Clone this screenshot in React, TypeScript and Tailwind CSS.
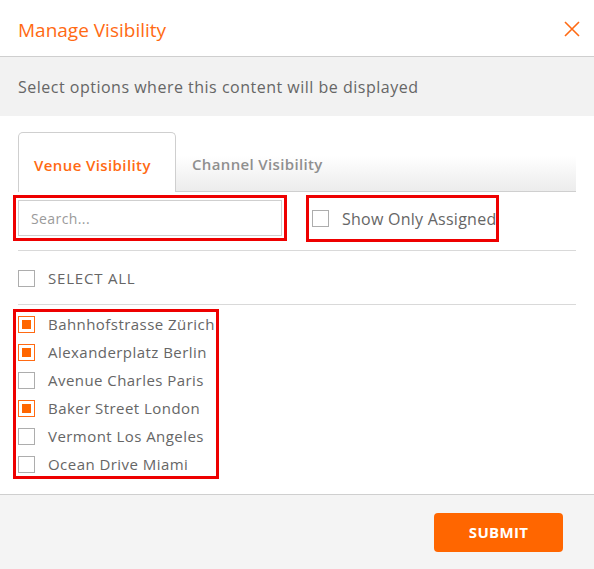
import { useState } from 'react'

// ── Data ──────────────────────────────────────────────────────────────────────

const VENUES = [
  { name: 'Bahnhofstrasse Zürich', checked: true },
  { name: 'Alexanderplatz Berlin', checked: true },
  { name: 'Avenue Charles Paris',  checked: false },
  { name: 'Baker Street London',   checked: true },
  { name: 'Vermont Los Angeles',   checked: false },
  { name: 'Ocean Drive Miami',     checked: false },
]

// ── Checkbox ──────────────────────────────────────────────────────────────────

function Box({ checked, onClick }: { checked: boolean; onClick?: () => void }) {
  return (
    <button
      type="button"
      onClick={onClick}
      className={
        checked
          ? 'w-[17px] h-[17px] shrink-0 border border-[#ff6a13] p-[3px] bg-white'
          : 'w-[17px] h-[17px] shrink-0 border border-[#adadad] bg-white'
      }
    >
      {checked && <span className="block w-full h-full bg-[#ff6600]" />}
    </button>
  )
}

// ── Modal ─────────────────────────────────────────────────────────────────────

export default function App() {
  const [venues, setVenues] = useState(VENUES)
  const [onlyAssigned, setOnlyAssigned] = useState(false)
  const allChecked = venues.every(v => v.checked)

  const toggle = (i: number) =>
    setVenues(prev => prev.map((v, j) => (j === i ? { ...v, checked: !v.checked } : v)))

  return (
    <div className="w-[594px] h-[569px] bg-white flex flex-col text-[#666] font-['Open_Sans',sans-serif]">
      {/* Header */}
      <div className="h-[57px] shrink-0 border-b border-[#cfcfcf] px-[18px] flex items-center justify-between">
        <span className="text-[19px] text-[#ff6a13] leading-none pt-[4px]">Manage Visibility</span>
        <svg width="16" height="16" viewBox="0 0 16 16" className="mr-[-4px] mt-[1px]">
          <path d="M1 1 L15 15 M15 1 L1 15" stroke="#ff6a13" strokeWidth="1.6" fill="none" />
        </svg>
      </div>

      {/* Description */}
      <div className="h-[59px] shrink-0 bg-[#f2f2f2] px-[18px] flex items-center">
        <span className="text-[16px] tracking-[0.5px] text-[#666]">Select options where this content will be displayed</span>
      </div>

      {/* Body */}
      <div className="flex-1 px-[18px] pt-[16px]">
        {/* Tabs */}
        <div className="flex h-[60px]">
          <div className="w-[158px] h-full border border-b-0 border-[#cfcfcf] rounded-t-[5px] flex items-center pl-[15px] pt-[5px]">
            <span className="text-[15px] font-semibold tracking-[0.4px] text-[#ff6a13]">Venue Visibility</span>
          </div>
          <div className="flex-1 h-full border-b border-[#cfcfcf] bg-gradient-to-b from-white from-40% to-[#ececec] flex items-center pl-[16px] pt-[5px]">
            <span className="text-[15px] font-semibold tracking-[0.35px] text-[#8f8f8f]">Channel Visibility</span>
          </div>
        </div>

        {/* Search + filter */}
        <div className="h-[59px] border-b border-[#d9d9d9] flex items-start pt-[3px]">
          <div className="-ml-[5px] border-[3px] border-[#ee0000] p-[2px]">
            <input
              placeholder="Search..."
              className="w-[264px] h-[36px] border border-[#cfcfcf] px-[12px] text-[14px] tracking-[0.4px] text-[#666] placeholder:text-[#9a9a9a] outline-none"
            />
          </div>
          <div className="ml-[19px] w-[193px] h-[47px] border-[3px] border-[#ee0000] flex items-center pl-[3px] gap-[13px]">
            <Box checked={onlyAssigned} onClick={() => setOnlyAssigned(!onlyAssigned)} />
            <span className="text-[16px] tracking-[0.25px] text-[#666] whitespace-nowrap">Show Only Assigned</span>
          </div>
        </div>

        {/* Select all */}
        <div className="h-[54px] border-b border-[#d9d9d9] flex items-center gap-[13px] pt-[2px]">
          <Box checked={allChecked} onClick={() => setVenues(prev => prev.map(v => ({ ...v, checked: !allChecked })))} />
          <span className="text-[15px] text-[#666] tracking-[0.8px]">SELECT ALL</span>
        </div>

        {/* Venue list */}
        <div className="mt-[4px] -ml-[5px] w-[206px] border-[3px] border-[#ee0000] pl-[2px] flex flex-col gap-[4px]">
          {venues.map((v, i) => (
            <div key={v.name} className="h-[24px] flex items-center gap-[13px]">
              <Box checked={v.checked} onClick={() => toggle(i)} />
              <span className="text-[15px] tracking-[0.45px] text-[#666] whitespace-nowrap">{v.name}</span>
            </div>
          ))}
        </div>
      </div>

      {/* Footer */}
      <div className="h-[75px] shrink-0 border-t border-[#cfcfcf] bg-[#f4f4f4] flex items-start justify-end pt-[18px] pr-[31px]">
        <button className="w-[129px] h-[39px] rounded-[4px] bg-[#ff6600] text-white text-[15px] font-bold tracking-[0.3px]">
          SUBMIT
        </button>
      </div>
    </div>
  )
}
